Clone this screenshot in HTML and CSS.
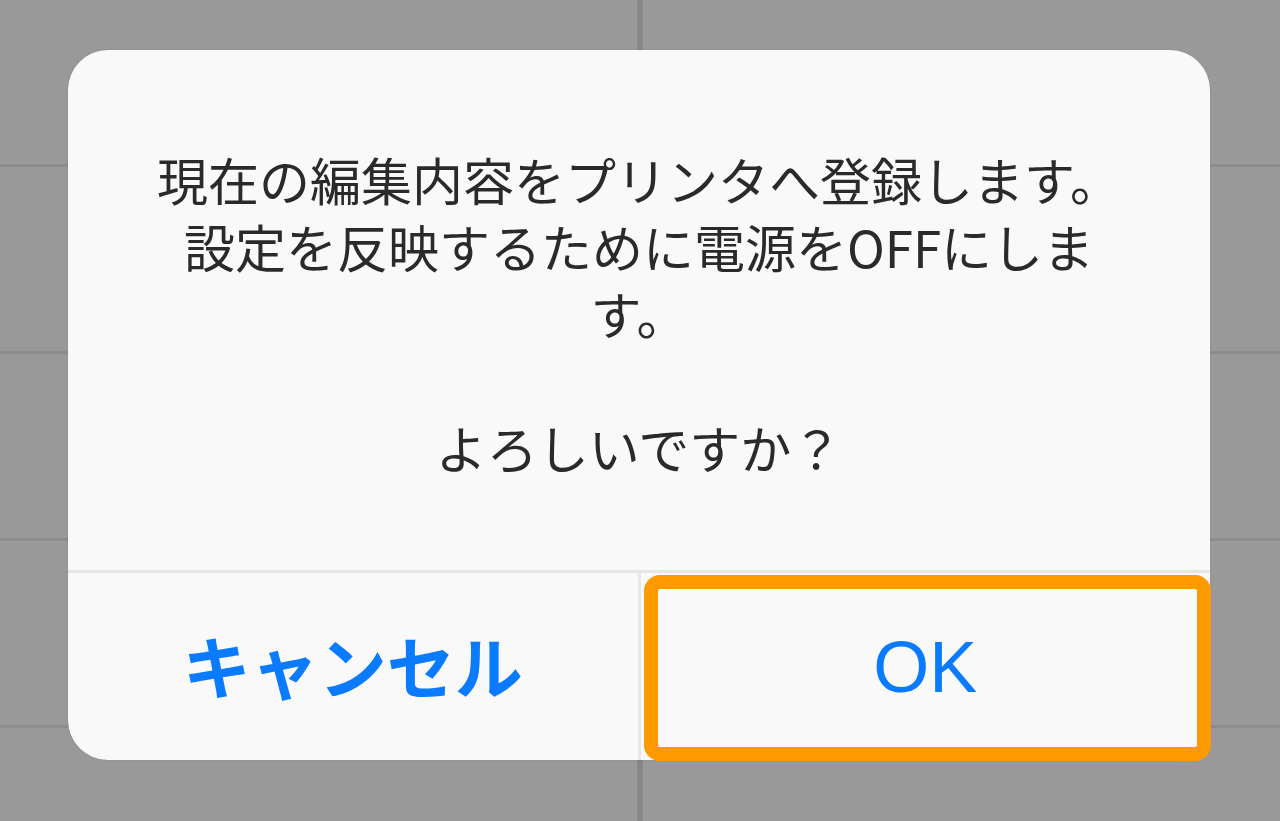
FILE: index.html
```html
<!DOCTYPE html>
<html lang="ja">
<head>
<meta charset="UTF-8">
<meta name="viewport" content="width=device-width, initial-scale=1.0">
<title>確認</title>
<link rel="stylesheet" href="styles.css">
</head>
<body>

<div class="dialog">
    <div class="message">
        <p>現在の編集内容をプリンタへ登録します。設定を反映するために電源をOFFにします。</p>
        <p>よろしいですか？</p>
    </div>
    <div class="buttons">
        <button class="btn btn-cancel">キャンセル</button>
        <button class="btn btn-ok">OK<span class="highlight"></span></button>
    </div>
</div>

</body>
</html>
```

FILE: styles.css
```css
html, body {
    height: 100%;
}
body {
    margin: 0;
    padding-top: 50px;
    box-sizing: border-box;
    overflow: hidden;
    font-family: "Liberation Sans", "Noto Sans CJK JP", sans-serif;
    background-color: #999999;
    background-image:
        linear-gradient(to right, transparent 637px, #8e8e8e 637px, #858585 639px, #858585 641px, #8e8e8e 643px, transparent 643px),
        repeating-linear-gradient(to bottom, transparent 0, transparent 164px, #8c8c8c 164px, #8c8c8c 167px, transparent 167px, transparent 187px);
}
.dialog {
    margin-left: 68px;
    width: 1142px;
    height: 710px;
    background: #f9f9f9;
    border-radius: 40px;
    box-shadow: 0 0 2px rgba(0, 0, 0, 0.12);
    display: flex;
    flex-direction: column;
}
.message {
    flex: 1;
    padding: 96px 81px 0;
    border-bottom: 3px solid #e6e6e8;
    text-align: center;
    font-family: "Noto Sans CJK JP", sans-serif;
    font-size: 51px;
    line-height: 67px;
    color: #2a2a2a;
}
.message p {
    margin: 0 0 67px;
}
.message p:last-child {
    margin-bottom: 0;
}
.buttons {
    height: 187px;
    display: flex;
}
.btn {
    flex: 1;
    border: none;
    background: transparent;
    padding: 0;
    margin: 0;
    color: #0a7aff;
    font-family: "Liberation Sans", "Noto Sans CJK JP", sans-serif;
    cursor: pointer;
}
.btn-cancel {
    font-size: 68px;
    font-weight: bold;
    padding-bottom: 4px;
    border-right: 3px solid #e6e6e8;
    border-bottom-left-radius: 40px;
}
.btn-ok {
    position: relative;
    font-size: 72px;
    border-bottom-right-radius: 40px;
}
.highlight {
    position: absolute;
    top: 2px;
    left: 3px;
    right: -1px;
    bottom: -1px;
    border: 14px solid #ff9900;
    border-radius: 16px;
}
```
